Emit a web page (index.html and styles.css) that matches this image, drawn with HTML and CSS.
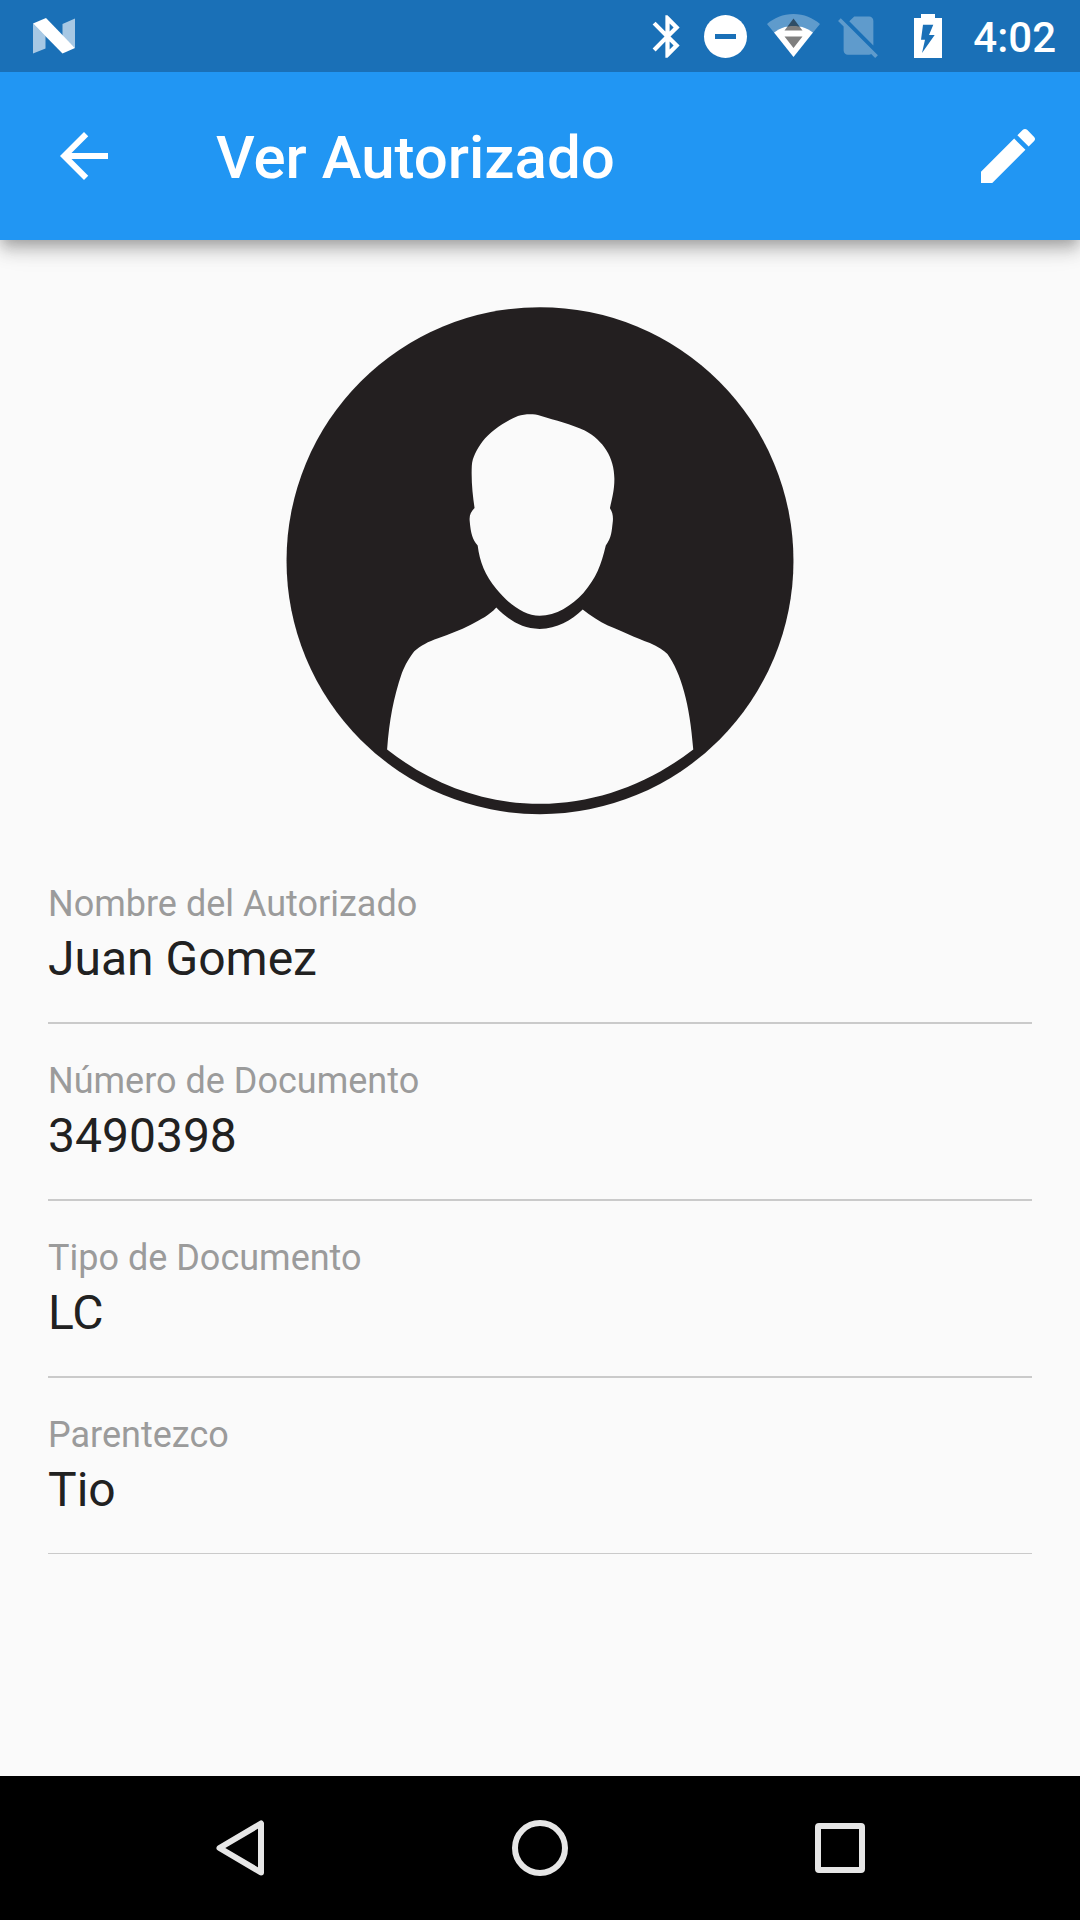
FILE: index.html
```html
<!DOCTYPE html>
<html lang="es">
<head>
<meta charset="utf-8">
<meta name="viewport" content="width=device-width, initial-scale=1">
<title>Ver Autorizado</title>
<link rel="stylesheet" href="styles.css">
</head>
<body>
<div class="status-bar">
  <svg class="status-logo" viewBox="0 0 54 72" aria-hidden="true">
    <path class="faded" d="M6 23.5L18.500 36V48.500L6 53.500zM35.500 24L48 18.500V48L35.500 36z"/>
    <path d="M6 23.500L19 18L48 48L35.500 53.500z"/>
  </svg>
  <div class="status-icons">
    <svg class="status-icon" viewBox="0 0 56 72" aria-hidden="true">
      <path transform="translate(13 11) scale(2.125)" d="M17.71 7.710L12 2h-1v7.590L6.410 5 5 6.410 10.590 12 5 17.590 6.410 19 11 14.410V22h1l5.710-5.710-4.300-4.290 4.300-4.290zM13 5.830l1.880 1.880L13 9.590V5.830zm1.880 10.460L13 18.170v-3.760l1.880 1.880z"/>
    </svg>
    <svg class="status-icon" viewBox="0 0 56 72" aria-hidden="true">
      <circle cx="28.500" cy="36.500" r="21.500"/>
      <path class="cutout" d="M18 34h21v5H18z"/>
    </svg>
    <svg class="status-icon" viewBox="0 0 56 72" aria-hidden="true">
      <path class="dim" d="M2 24C9 18 18 14 28.500 14S48 18 55 24L48 32.500C42 28 36 26 28.500 26S15 28 9 32.500z"/>
      <path d="M28.500 57L9 32.500C15 28 21 26 28.500 26S42 28 48 32.500z"/>
      <path class="shade" d="M28.500 18.500L37.500 30.500H19.500zM19.500 36.500h18L28.500 48z"/>
    </svg>
    <svg class="status-icon" viewBox="0 0 56 72" aria-hidden="true">
      <path class="dim" transform="translate(0 10) scale(2.125)" d="M18.990 5c0-1.100-.890-2-1.990-2h-7L7.660 5.340 19 16.680 18.990 5zM3.650 3.880L2.380 5.150 5 7.770V19c0 1.100.900 2 2 2h10.010c.350 0 .670-.100.960-.260l1.880 1.880 1.270-1.270L3.650 3.880z"/>
    </svg>
    <svg class="status-icon" viewBox="0 0 56 72" aria-hidden="true">
      <path d="M20 14h14v4h7v40H13V18h7z"/>
      <path class="cutout" d="M22 24.700H32.300L28 35H33.700L21 53L24 39.700H20z"/>
    </svg>
  </div>
  <time class="clock">4:02</time>
</div>

<header class="app-bar">
  <button class="icon-button" type="button" aria-label="Volver">
    <svg class="icon" viewBox="0 0 24 24" aria-hidden="true"><path d="M20 11H7.830l5.590-5.590L12 4l-8 8 8 8 1.410-1.410L7.830 13H20v-2z"/></svg>
  </button>
  <h1 class="title">Ver Autorizado</h1>
  <button class="icon-button" type="button" aria-label="Editar">
    <svg class="icon" viewBox="0 0 24 24" aria-hidden="true"><path d="M3 17.250V21h3.750L17.810 9.940l-3.750-3.750L3 17.250zM20.710 7.040c.390-.390.390-1.020 0-1.410l-2.340-2.340c-.390-.390-1.020-.390-1.410 0l-1.830 1.830 3.750 3.750 1.830-1.830z"/></svg>
  </button>
</header>

<main class="content">
  <svg class="avatar" viewBox="0 0 1568 1568" role="img" aria-label="Foto del autorizado">
    <circle class="avatar-disc" cx="784" cy="786" r="736"/>
    <path class="avatar-shape" d="M720 366C740 360 765 359 785 365C830 379 874 389 914 408C968 437 1000 487 1000 548C1000 582 993 606 987 634C996 647 997 661 995 676C992 700 992 719 975 742C961 800 948 835 910 880C875 917 831 946 783 946C738 946 690 909 658 869C624 829 609 789 603 742C588 724 583 707 580 672C578 654 583 645 594 633C588 595 584 552 586 510C588 485 600 464 617 440C642 408 681 382 720 366z"/>
    <path class="avatar-shape" d="M657 922C690 955 728 984 783 984C834 984 874 960 908 928C930 946 957 963 981 974C1025 992 1059 1009 1103 1025C1127 1036 1143 1046 1154 1057C1194 1113 1219 1202 1229 1334C1101 1434 944 1492 785 1492C622 1492 469 1436 340 1334C347 1246 358 1186 383 1112C394 1086 404 1068 419 1049C438 1032 459 1021 488 1011C521 999 551 989 583 972C613 956 638 944 657 922z"/>
  </svg>
  <form class="fields">
    <div class="field">
      <label class="field-label" for="nombre">Nombre del Autorizado</label>
      <input class="field-value" id="nombre" type="text" value="Juan Gomez" readonly>
    </div>
    <div class="field">
      <label class="field-label" for="numero">Número de Documento</label>
      <input class="field-value" id="numero" type="text" value="3490398" readonly>
    </div>
    <div class="field">
      <label class="field-label" for="tipo">Tipo de Documento</label>
      <input class="field-value" id="tipo" type="text" value="LC" readonly>
    </div>
    <div class="field">
      <label class="field-label" for="parentezco">Parentezco</label>
      <input class="field-value" id="parentezco" type="text" value="Tio" readonly>
    </div>
  </form>
</main>

<nav class="nav-bar">
  <button class="nav-button" type="button" aria-label="Atrás">
    <svg class="nav-icon" viewBox="0 0 72 72" aria-hidden="true"><path d="M57 11.500V60.500L15.500 36z"/></svg>
  </button>
  <button class="nav-button" type="button" aria-label="Inicio">
    <svg class="nav-icon" viewBox="0 0 72 72" aria-hidden="true"><circle cx="36" cy="36" r="25"/></svg>
  </button>
  <button class="nav-button" type="button" aria-label="Recientes">
    <svg class="nav-icon" viewBox="0 0 72 72" aria-hidden="true"><rect x="14" y="14" width="44" height="44" rx="1"/></svg>
  </button>
</nav>
</body>
</html>
```
FILE: styles.css
```css
* {
  box-sizing: border-box;
}

body {
  margin: 0;
  min-height: 100vh;
  display: flex;
  flex-direction: column;
  background: #fafafa;
  color: #212121;
  font-family: Roboto, sans-serif;
}

button {
  padding: 0;
  border: 0;
  background: none;
  color: inherit;
}

svg {
  display: block;
}

/* Status bar, kept above the app bar's shadow */
.status-bar {
  display: flex;
  align-items: center;
  z-index: 1;
  padding: 0 24px 0 27px;
  background: #1a70b7;
  color: #fff;
}

.status-logo,
.status-icon {
  height: 72px;
  fill: #fff;
}

.status-logo {
  width: 54px;
}

.status-icon {
  width: 56px;
}

.status-icons {
  display: flex;
  gap: 12px;
  margin-left: auto;
  margin-right: 16px;
}

.faded {
  fill-opacity: 0.62;
}

.dim {
  fill-opacity: 0.3;
}

.shade {
  fill: #000;
  fill-opacity: 0.5;
}

.cutout {
  fill: #1a70b7;
}

.clock {
  padding-top: 4px;
  font-size: 42px;
  line-height: 48px;
  font-weight: 500;
}

/* App bar */
.app-bar {
  display: flex;
  align-items: center;
  height: 168px;
  padding: 0 36px 0 48px;
  background: #2196f3;
  color: #fff;
  box-shadow: 0 6px 12px -3px rgba(0, 0, 0, 0.2),
    0 12px 15px 0 rgba(0, 0, 0, 0.14),
    0 3px 30px 0 rgba(0, 0, 0, 0.12);
}

.icon {
  width: 72px;
  height: 72px;
  fill: currentColor;
}

.title {
  flex: 1;
  margin: 0;
  padding: 4px 0 0 96px;
  font-size: 60px;
  line-height: 70px;
  font-weight: 500;
}

/* Content */
.content {
  flex: 1;
  padding: 50px 48px;
}

.avatar {
  width: 540px;
  height: 540px;
  max-width: 100%;
  margin: 0 auto 17px;
}

.avatar-disc {
  fill: #231f20;
}

.avatar-shape {
  fill: #fafafa;
}

.field {
  display: flex;
  flex-direction: column;
  gap: 6px;
  padding: 36px 0 35px;
  border-bottom: 2px solid #cacaca;
}

.field:last-child {
  border-bottom-width: 1px;
}

.field-label {
  font-size: 36px;
  line-height: 42px;
  color: #9b9b9b;
}

.field-value {
  width: 100%;
  height: 56px;
  padding: 0;
  border: 0;
  outline: 0;
  background: none;
  color: inherit;
  font: 48px/56px Roboto, sans-serif;
}

/* System navigation */
.nav-bar {
  display: grid;
  grid-template-columns: repeat(3, 1fr);
  height: 144px;
  padding: 0 90px;
  background: #000;
}

.nav-button {
  display: grid;
  place-items: center;
}

.nav-icon {
  width: 72px;
  height: 72px;
  fill: none;
  stroke: #e6e6e6;
  stroke-width: 6px;
  stroke-linejoin: round;
}
```
